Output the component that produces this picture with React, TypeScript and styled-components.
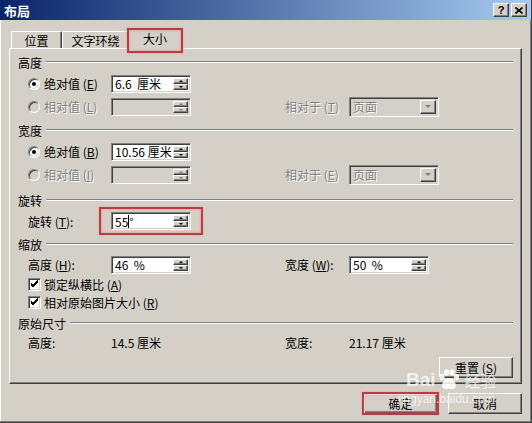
import styled, { createGlobalStyle, css } from "styled-components";

/* --- CSS --- */
const FACE = "#d4d0c8";

const GlobalStyle = createGlobalStyle`
  html, body {
    margin: 0;
    padding: 0;
    background: ${FACE};
  }
  body {
    font-family: "Noto Sans CJK SC", "Liberation Sans", sans-serif;
    font-size: 12px;
    color: #000;
  }
`;

const raised = css`
  border: 1px solid;
  border-color: #fff #404040 #404040 #fff;
  box-shadow: inset -1px -1px #808080, inset 1px 1px ${FACE};
`;

const sunken = css`
  border: 1px solid;
  border-color: #808080 #fff #fff #808080;
  box-shadow: inset 1px 1px #404040, inset -1px -1px ${FACE};
`;

const redBox = css`
  border: 2px solid #bd3943;
  box-shadow: inset 0 0 3px rgba(240, 130, 140, 0.9), 0 0 2px rgba(240, 130, 140, 0.6);
  pointer-events: none;
`;

const Window = styled.div`
  position: relative;
  box-sizing: border-box;
  width: 532px;
  height: 423px;
  background: ${FACE};
  border-right: 1px solid #404040;
  border-bottom: 1px solid #404040;
  box-shadow: inset -1px -1px #808080, inset 1px 0 #fff;
  overflow: hidden;
`;

const TitleBar = styled.div`
  height: 20px;
  display: flex;
  align-items: center;
  justify-content: space-between;
  padding: 0 4px 0 4px;
  background: linear-gradient(to right, #0a246a, #a6caf0);
`;

const Title = styled.span`
  color: #fff;
  font-weight: bold;
  font-size: 13px;
`;

const TitleButtons = styled.div`
  display: flex;
  gap: 2px;
`;

const TitleButton = styled.div`
  box-sizing: border-box;
  width: 16px;
  height: 14px;
  ${raised};
  background: ${FACE};
  display: flex;
  align-items: center;
  justify-content: center;
  font-family: "Liberation Sans", sans-serif;
  font-weight: bold;
  font-size: 11px;
  line-height: 1;
`;

const Body = styled.div`
  padding: 8px 9px 0 9px;
`;

const TabRow = styled.div`
  display: flex;
  align-items: flex-end;
  height: 20px;
  padding-left: 2px;
`;

const Tab = styled.div<{ $w: number; $active?: boolean }>`
  box-sizing: border-box;
  width: ${(p) => p.$w}px;
  height: 17px;
  display: flex;
  align-items: center;
  justify-content: center;
  background: ${FACE};
  border-top: 1px solid #fff;
  border-left: 1px solid #fff;
  border-right: 1px solid #404040;
  box-shadow: inset -1px 0 #808080;
  border-radius: 2px 2px 0 0;
  ${(p) =>
    p.$active &&
    css`
      position: relative;
      z-index: 1;
      width: ${p.$w + 4}px;
      height: 21px;
      margin: 0 -2px -1px;
      padding-bottom: 2px;
      &::after {
        content: "";
        position: absolute;
        left: -1px;
        right: -1px;
        top: -1px;
        bottom: -4px;
        ${redBox};
      }
    `}
`;

const Panel = styled.div`
  box-sizing: border-box;
  height: 336px;
  border: 1px solid;
  border-color: #fff #404040 #404040 #fff;
  box-shadow: inset -1px -1px #808080;
  padding: 0 8px 5px 8px;
  display: flex;
  flex-direction: column;
`;

const SectionHead = styled.div<{ $mt: number }>`
  height: 20px;
  margin-top: ${(p) => p.$mt}px;
  display: flex;
  align-items: center;
  gap: 4px;
  white-space: nowrap;
  &::after {
    content: "";
    flex: 1;
    border-top: 1px solid #808080;
    border-bottom: 1px solid #fff;
  }
`;

const FieldRow = styled.div<{ $h: number }>`
  display: grid;
  grid-template-columns: 93px 80px 94px 64px 90px;
  align-items: center;
  height: ${(p) => p.$h}px;
`;

const Label = styled.div<{ $disabled?: boolean; $indent?: boolean }>`
  display: flex;
  align-items: center;
  padding-left: ${(p) => (p.$indent ? 10 : 0)}px;
  white-space: pre;
  color: ${(p) => (p.$disabled ? "#808080" : "#000")};
  text-shadow: ${(p) => (p.$disabled ? "1px 1px 0 #fff" : "none")};
`;

const Key = styled.span`
  text-decoration: underline;
`;

const Radio = styled.span<{ $checked?: boolean; $disabled?: boolean }>`
  box-sizing: border-box;
  width: 12px;
  height: 12px;
  margin-right: 4px;
  border-radius: 50%;
  border: 1px solid;
  border-color: #808080 #fff #fff #808080;
  box-shadow: inset 1px 1px #404040, inset -1px -1px ${FACE};
  background: ${(p) => (p.$disabled ? FACE : "#fff")};
  display: flex;
  align-items: center;
  justify-content: center;
  &::after {
    content: "";
    width: 4px;
    height: 4px;
    border-radius: 50%;
    background: ${(p) => (p.$checked ? "#000" : "transparent")};
  }
`;

const CheckBox = styled.span`
  box-sizing: border-box;
  width: 13px;
  height: 13px;
  margin-right: 3px;
  ${sunken};
  background: #fff;
  display: flex;
  align-items: center;
  justify-content: center;
`;

const Field = styled.div<{ $w: number; $disabled?: boolean; $h?: number }>`
  box-sizing: border-box;
  width: ${(p) => p.$w}px;
  height: ${(p) => p.$h ?? 18}px;
  ${sunken};
  padding: 2px;
  display: flex;
  align-items: stretch;
  background: ${(p) => (p.$disabled ? FACE : "#fff")};
`;

const FieldText = styled.div<{ $disabled?: boolean }>`
  flex: 1;
  display: flex;
  align-items: center;
  padding-left: 1px;
  white-space: pre;
  color: ${(p) => (p.$disabled ? "#808080" : "#000")};
  text-shadow: ${(p) => (p.$disabled ? "1px 1px 0 #fff" : "none")};
`;

const Caret = styled.span`
  display: inline-block;
  width: 1px;
  height: 13px;
  background: #000;
`;

const Spin = styled.div`
  width: 15px;
  display: flex;
  flex-direction: column;
`;

const SpinButton = styled.div`
  box-sizing: border-box;
  flex: 1;
  ${raised};
  background: ${FACE};
  display: flex;
  align-items: center;
  justify-content: center;
`;

const Arrow = styled.span<{ $down?: boolean; $disabled?: boolean }>`
  width: 0;
  height: 0;
  border-left: 2px solid transparent;
  border-right: 2px solid transparent;
  ${(p) =>
    p.$down
      ? css`border-top: 2px solid ${p.$disabled ? "#808080" : "#000"};`
      : css`border-bottom: 2px solid ${p.$disabled ? "#808080" : "#000"};`}
`;

const DropArrow = styled.span`
  width: 0;
  height: 0;
  border-left: 3px solid transparent;
  border-right: 3px solid transparent;
  border-top: 3px solid #808080;
`;

const DropButton = styled.div`
  box-sizing: border-box;
  width: 16px;
  ${raised};
  background: ${FACE};
  display: flex;
  align-items: center;
  justify-content: center;
`;

const Highlight = styled.div<{ $x: number; $y: number }>`
  position: relative;
  display: inline-flex;
  &::after {
    content: "";
    position: absolute;
    left: -${(p) => p.$x}px;
    right: -${(p) => p.$x}px;
    top: -${(p) => p.$y}px;
    bottom: -${(p) => p.$y}px;
    ${redBox};
  }
`;

const CheckRow = styled.div`
  height: 18px;
  display: flex;
  align-items: center;
  white-space: pre;
  padding-left: 10px;
`;

const ButtonRow = styled.div<{ $mt: number }>`
  display: flex;
  justify-content: flex-end;
  gap: 10px;
  margin-top: ${(p) => p.$mt}px;
`;

const Button = styled.button<{ $default?: boolean; $w?: number }>`
  box-sizing: border-box;
  width: ${(p) => p.$w ?? 75}px;
  height: 21px;
  padding: 0;
  font: inherit;
  color: #000;
  background: ${FACE};
  ${raised};
  ${(p) =>
    p.$default &&
    css`
      border: 1px solid #000;
      box-shadow: inset 1px 1px #fff, inset -1px -1px #404040, inset -2px -2px #808080;
    `}
`;

const Watermark = styled.div`
  position: absolute;
  left: 398px;
  top: 369px;
  color: rgba(255, 255, 255, 0.72);
  pointer-events: none;
`;

const WmLogo = styled.div`
  display: flex;
  align-items: center;
  gap: 1px;
  padding-left: 8px;
  font-family: "Liberation Sans", sans-serif;
  font-weight: bold;
  font-size: 19px;
  line-height: 22px;
`;

const WmCn = styled.span`
  font-family: "Noto Sans CJK SC", sans-serif;
  font-weight: normal;
  font-size: 16px;
  margin-left: 3px;
`;

const WmUrl = styled.div`
  font-family: "Liberation Sans", sans-serif;
  font-size: 12px;
  margin-top: 1px;
`;

/* --- parts --- */
function SpinField({ w, value, disabled }: { w: number; value?: React.ReactNode; disabled?: boolean }) {
  return (
    <Field $w={w} $disabled={disabled}>
      <FieldText>{value}</FieldText>
      <Spin>
        <SpinButton>
          <Arrow $disabled={disabled} />
        </SpinButton>
        <SpinButton>
          <Arrow $down $disabled={disabled} />
        </SpinButton>
      </Spin>
    </Field>
  );
}

function SelectField({ value }: { value: string }) {
  return (
    <Field $w={90} $h={20} $disabled>
      <FieldText $disabled>{value}</FieldText>
      <DropButton>
        <DropArrow />
      </DropButton>
    </Field>
  );
}

const Check = () => (
  <svg width="9" height="9" viewBox="0 0 9 9">
    <path d="M1 4 L3 6 L8 1 M1 5 L3 7 L8 2 M1 3 L3 5 L8 0" stroke="#000" strokeWidth="1" fill="none" />
  </svg>
);

const Paw = () => (
  <svg width="24" height="22" viewBox="0 0 24 22">
    <g fill="rgba(255,255,255,0.85)">
      <ellipse cx="5" cy="8" rx="2.6" ry="3.2" />
      <ellipse cx="9.5" cy="3.5" rx="2.6" ry="3.2" />
      <ellipse cx="15" cy="3.5" rx="2.6" ry="3.2" />
      <ellipse cx="19.5" cy="8" rx="2.6" ry="3.2" />
      <path d="M12 9 C7 9 4 15 5.5 18.5 C7 21 10 20 12 19.5 C14 20 17 21 18.5 18.5 C20 15 17 9 12 9 Z" />
    </g>
  </svg>
);

function App() {
  return (
    <>
      <GlobalStyle />
      <Window>
        <TitleBar>
          <Title>布局</Title>
          <TitleButtons>
            <TitleButton>?</TitleButton>
            <TitleButton>
              <svg width="8" height="7" viewBox="0 0 8 7">
                <path d="M0.5 0.5 L7.5 6.5 M7.5 0.5 L0.5 6.5" stroke="#000" strokeWidth="1.6" />
              </svg>
            </TitleButton>
          </TitleButtons>
        </TitleBar>

        <Body>
          <TabRow>
            <Tab $w={51}>位置</Tab>
            <Tab $w={67}>文字环绕</Tab>
            <Tab $w={52} $active>
              大小
            </Tab>
          </TabRow>

          <Panel>
            {/* 高度 */}
            <SectionHead $mt={3}>高度</SectionHead>
            <FieldRow $h={23}>
              <Label $indent>
                <Radio $checked />
                <span>
                  绝对值 (<Key>E</Key>)
                </span>
              </Label>
              <SpinField w={80} value="6.6  厘米" />
            </FieldRow>
            <FieldRow $h={23}>
              <Label $indent $disabled>
                <Radio $disabled />
                <span>
                  相对值 (<Key>L</Key>)
                </span>
              </Label>
              <SpinField w={80} disabled />
              <span />
              <Label $disabled>
                <span>
                  相对于 (<Key>T</Key>)
                </span>
              </Label>
              <SelectField value="页面" />
            </FieldRow>

            {/* 宽度 */}
            <SectionHead $mt={2}>宽度</SectionHead>
            <FieldRow $h={23}>
              <Label $indent>
                <Radio $checked />
                <span>
                  绝对值 (<Key>B</Key>)
                </span>
              </Label>
              <SpinField w={80} value="10.56 厘米" />
            </FieldRow>
            <FieldRow $h={23}>
              <Label $indent $disabled>
                <Radio $disabled />
                <span>
                  相对值 (<Key>I</Key>)
                </span>
              </Label>
              <SpinField w={80} disabled />
              <span />
              <Label $disabled>
                <span>
                  相对于 (<Key>E</Key>)
                </span>
              </Label>
              <SelectField value="页面" />
            </FieldRow>

            {/* 旋转 */}
            <SectionHead $mt={4}>旋转</SectionHead>
            <FieldRow $h={22}>
              <Label $indent>
                <span>
                  旋转 (<Key>T</Key>):
                </span>
              </Label>
              <Highlight $x={12} $y={5}>
                <SpinField
                  w={80}
                  value={
                    <>
                      55
                      <Caret />°
                    </>
                  }
                />
              </Highlight>
            </FieldRow>

            {/* 缩放 */}
            <SectionHead $mt={2}>缩放</SectionHead>
            <FieldRow $h={21}>
              <Label $indent>
                <span>
                  高度 (<Key>H</Key>):
                </span>
              </Label>
              <SpinField w={80} value="46  %" />
              <span />
              <Label>
                <span>
                  宽度 (<Key>W</Key>):
                </span>
              </Label>
              <SpinField w={80} value="50  %" />
            </FieldRow>
            <CheckRow>
              <CheckBox>
                <Check />
              </CheckBox>
              <span>
                锁定纵横比 (<Key>A</Key>)
              </span>
            </CheckRow>
            <CheckRow>
              <CheckBox>
                <Check />
              </CheckBox>
              <span>
                相对原始图片大小 (<Key>R</Key>)
              </span>
            </CheckRow>

            {/* 原始尺寸 */}
            <SectionHead $mt={2}>原始尺寸</SectionHead>
            <FieldRow $h={18}>
              <Label $indent>高度:</Label>
              <Label>14.5 厘米</Label>
              <span />
              <Label>宽度:</Label>
              <Label>21.17 厘米</Label>
            </FieldRow>

            <ButtonRow $mt={6}>
              <Button $w={74}>
                重置 (<Key>S</Key>)
              </Button>
            </ButtonRow>
          </Panel>

          <ButtonRow $mt={9}>
            <Highlight $x={1} $y={1}>
              <Button $default>确定</Button>
            </Highlight>
            <Button $w={74}>取消</Button>
          </ButtonRow>
        </Body>

        {/* 水印 */}
        <Watermark>
          <WmLogo>
            Bai
            <Paw />
            <WmCn>经验</WmCn>
          </WmLogo>
          <WmUrl>jingyan.baidu.com</WmUrl>
        </Watermark>
      </Window>
    </>
  );
}

export default App;
